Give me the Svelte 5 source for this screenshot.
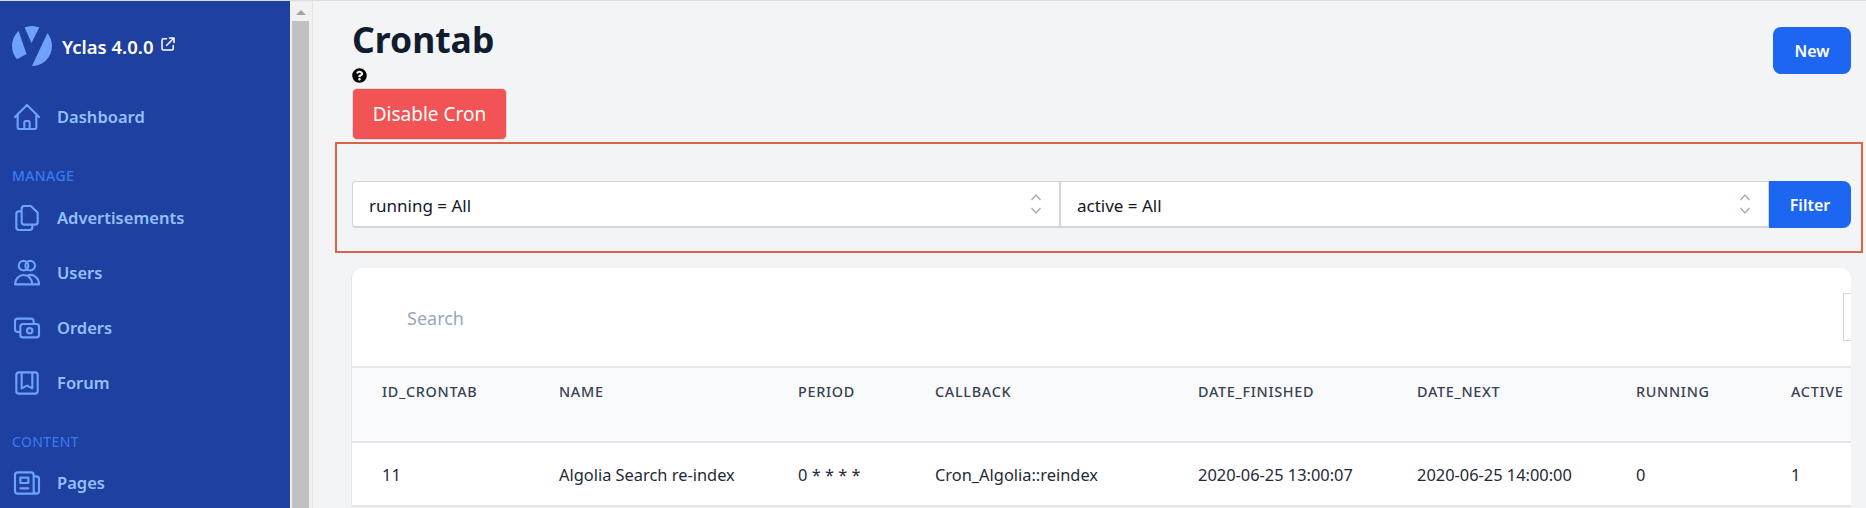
<script>
  const manage = [
    { label: "Advertisements", icon: "duplicate" },
    { label: "Users", icon: "users" },
    { label: "Orders", icon: "cash" },
    { label: "Forum", icon: "bookmark" }
  ];
  const paths = {
    home: "M3 12l2-2m0 0l7-7 7 7M5 10v10a1 1 0 001 1h3m10-11l2 2m-2-2v10a1 1 0 01-1 1h-3m-6 0a1 1 0 001-1v-4a1 1 0 011-1h2a1 1 0 011 1v4a1 1 0 001 1m-6 0h6",
    duplicate: "M8 7v8a2 2 0 002 2h6M8 7V5a2 2 0 012-2h4.586a1 1 0 01.707.293l4.414 4.414a1 1 0 01.293.707V15a2 2 0 01-2 2h-2M8 7H6a2 2 0 00-2 2v10a2 2 0 002 2h8a2 2 0 002-2v-2",
    users: "M13 6.5a3.6 3.6 0 11-7.2 0 3.6 3.6 0 017.2 0zM18 6.5a3.6 3.6 0 11-7.2 0 3.6 3.6 0 017.2 0zM3 20.5c0-4 3-7 6.5-7s6.5 3 6.5 7zM13 13.6c4.5-1 8 2.4 8 6.9h-5",
    cash: "M17 9V7a2 2 0 00-2-2H5a2 2 0 00-2 2v6a2 2 0 002 2h2m2 4h10a2 2 0 002-2v-6a2 2 0 00-2-2H9a2 2 0 00-2 2v6a2 2 0 002 2zm7-5a2 2 0 11-4 0 2 2 0 014 0z",
    bookmark: "M16 4v12l-4-2-4 2V4M6 20h12a2 2 0 002-2V6a2 2 0 00-2-2H6a2 2 0 00-2 2v12a2 2 0 002 2z",
    newspaper: "M19 20H5a2 2 0 01-2-2V6a2 2 0 012-2h10a2 2 0 012 2v1m2 13a2 2 0 01-2-2V7m2 13a2 2 0 002-2V9a2 2 0 00-2-2h-2m-4-3H9M7 16h6M7 8h6v4H7V8z"
  };
  const columns = ["ID_CRONTAB", "NAME", "PERIOD", "CALLBACK", "DATE_FINISHED", "DATE_NEXT", "RUNNING", "ACTIVE"];
  const row = ["11", "Algolia Search re-index", "0 * * * *", "Cron_Algolia::reindex", "2020-06-25 13:00:07", "2020-06-25 14:00:00", "0", "1"];
</script>

{#snippet navItem(label, icon)}
  <a class="nav-item" href="#top">
    <svg class="nav-icon" viewBox="0 0 24 24" fill="none" stroke="#6ea2fb" stroke-width="1.6" stroke-linecap="round" stroke-linejoin="round">
      <path d={paths[icon]} />
    </svg>
    <span>{label}</span>
  </a>
{/snippet}

{#snippet updown()}
  <svg class="updown" viewBox="0 0 12 24" fill="none" stroke="#a0aec0" stroke-width="1.5">
    <path d="M1.5 8l4.5-5 4.5 5M1.5 16l4.5 5 4.5-5" />
  </svg>
{/snippet}

<div class="page">
  <aside class="sidebar">
    <div class="brand">
      <svg class="logo" viewBox="0 0 40 40">
        <circle cx="20" cy="20" r="20" fill="#6ea2fb" />
        <path d="M5 0L8 9 14.5 28 0 36v6H19L35 8 40 0H28L19.5 17 12 0z" fill="#1e40a0" />
      </svg>
      <span class="brand-name">Yclas 4.0.0</span>
      <svg class="external" viewBox="0 0 24 24" fill="none" stroke="#fff" stroke-width="2" stroke-linecap="round" stroke-linejoin="round">
        <path d="M10 5H6a2 2 0 00-2 2v11a2 2 0 002 2h11a2 2 0 002-2v-4M14 4h6v6M20 4L10 14" />
      </svg>
    </div>
    {@render navItem("Dashboard", "home")}
    <div class="section">MANAGE</div>
    {#each manage as item}
      {@render navItem(item.label, item.icon)}
    {/each}
    <div class="section content">CONTENT</div>
    {@render navItem("Pages", "newspaper")}
  </aside>

  <div class="scrollbar">
    <div class="arrow"></div>
    <div class="thumb"></div>
  </div>

  <main class="main">
    <div class="head">
      <div>
        <h1>Crontab</h1>
        <svg class="help" viewBox="0 0 512 512">
          <path fill="#000" d="M504 256c0 137-111 248-248 248S8 393 8 256 119 8 256 8s248 111 248 248zM263 90c-54 0-89 23-116 64-4 5-3 12 2 16l35 26c5 4 13 3 17-2 18-22 30-35 57-35 20 0 45 13 45 33 0 15-12 23-33 34-23 13-54 30-54 71v6c0 7 5 12 12 12h56c7 0 12-5 12-12v-2c0-29 84-30 84-107 0-58-60-104-117-104zm-7 248c-25 0-46 21-46 46s21 46 46 46 46-21 46-46-21-46-46-46z" />
        </svg>
        <button class="btn-danger">Disable Cron</button>
      </div>
      <button class="btn-new">New</button>
    </div>

    <form class="filter">
      <div class="select"><span>running = All</span> {@render updown()}</div>
      <div class="select second"><span>active = All</span> {@render updown()}</div>
      <button class="btn-filter" type="button">Filter</button>
    </form>

    <section class="card">
      <div class="search">
        <span>Search</span>
        <div class="stub"></div>
      </div>
      <div class="grid header">
        {#each columns as col}
          <div>{col}</div>
        {/each}
      </div>
      <div class="grid body">
        {#each row as cell}
          <div>{cell}</div>
        {/each}
      </div>
    </section>
  </main>
</div>

<style>
  :global(body) {
    margin: 0;
    overflow: hidden;
    font-family: "Noto Sans", "Open Sans", sans-serif;
  }
  .page {
    display: flex;
    height: 507px;
    border-top: 1px solid #dcdde0;
    overflow: hidden;
    background: #f3f4f6;
    color: #111827;
  }
  .sidebar {
    width: 290px;
    flex: none;
    background: #1e40a0;
    color: #93c0fd;
    box-sizing: border-box;
  }
  .brand {
    display: flex;
    align-items: center;
    padding: 25px 12px 0;
    height: 40px;
    margin-bottom: 23px;
  }
  .logo {
    width: 40px;
    height: 40px;
    flex: none;
  }
  .brand-name {
    margin-left: 10px;
    color: #fff;
    font-size: 18.5px;
    font-weight: 600;
  }
  .external {
    width: 18px;
    height: 18px;
    margin-left: 6px;
    margin-top: -4px;
  }
  .nav-item {
    display: flex;
    align-items: center;
    height: 55px;
    padding-left: 11px;
    color: inherit;
    text-decoration: none;
    font-size: 16.5px;
    font-weight: 600;
  }
  .nav-icon {
    width: 32px;
    height: 32px;
    flex: none;
    margin-right: 14px;
  }
  .section {
    margin: 21px 0 0 12px;
    height: 25px;
    line-height: 22px;
    font-size: 14px;
    font-weight: 500;
    letter-spacing: 0.4px;
    color: #3b7bf2;
  }
  .section.content {
    margin-top: 21px;
    height: 24px;
    font-weight: 400;
  }
  .scrollbar {
    width: 17px;
    flex: none;
    padding: 0 3px 0 2px;
    background: #f1f1f1;
    border-right: 1px solid #e3e4e6;
  }
  .arrow {
    width: 0;
    margin: 9px auto 6px;
    border: 5px solid transparent;
    border-top: 0;
    border-bottom: 5px solid #a3a3a3;
  }
  .thumb {
    height: 500px;
    background: #c1c1c1;
  }
  .main {
    flex: 1;
    min-width: 0;
    padding: 0 4px 0 20px;
  }
  .head {
    display: flex;
    justify-content: space-between;
    align-items: flex-start;
    padding: 0 11px 0 19px;
    height: 141px;
  }
  h1 {
    margin: 13px 0 0;
    font-size: 35.5px;
    line-height: 50px;
    font-weight: 700;
    color: #111c2e;
  }
  .help {
    display: block;
    width: 15px;
    height: 15px;
    margin: 4px 0 5px;
  }
  button {
    font-family: inherit;
    border: 0;
    color: #fff;
  }
  .btn-danger {
    width: 155px;
    height: 52px;
    font-size: 19px;
    background: #f25455;
    border: 1px solid #d8dbe0;
    border-radius: 5px;
  }
  .btn-new {
    width: 78px;
    height: 47px;
    margin-top: 26px;
    background: #1d66f2;
    font-size: 16px;
    font-weight: 600;
    border-radius: 8px;
  }
  .filter {
    display: flex;
    align-items: stretch;
    height: 111px;
    box-sizing: border-box;
    border: 2px solid #d9664a;
    padding: 37px 10px 23px 15px;
    margin: 0 -1px 0 2px;
  }
  .select {
    display: flex;
    align-items: center;
    justify-content: space-between;
    width: 708px;
    box-sizing: border-box;
    padding: 0 17px 0 16px;
    background: #fff;
    border: 1px solid #d1d5db;
    border-bottom-width: 2px;
    border-radius: 4px 0 0 4px;
    font-size: 17px;
    color: #111827;
  }
  .select span {
    padding-top: 2px;
  }
  .select.second {
    width: 709px;
    border-left: 1px solid #d1d5db;
    border-radius: 0;
  }
  .updown {
    width: 12px;
    height: 24px;
  }
  .btn-filter {
    flex: 1;
    background: #1d66f2;
    font-size: 16px;
    font-weight: 600;
    border-radius: 0 8px 8px 0;
  }
  .card {
    margin: 15px 11px 0 18px;
    background: #fff;
    border-radius: 10px 10px 0 0;
    border-left: 1px solid #e5e7eb;
  }
  .search {
    display: flex;
    justify-content: space-between;
    align-items: center;
    height: 98px;
    padding-left: 55px;
    font-size: 18px;
    color: #9aa7bb;
  }
  .search span {
    padding-top: 2px;
  }
  .stub {
    width: 8px;
    height: 48px;
    box-sizing: border-box;
    border: 1px solid #d5d7db;
    border-right: 0;
  }
  .grid {
    display: grid;
    grid-template-columns: 177px 239px 137px 263px 219px 219px 155px 1fr;
    padding-left: 30px;
    border-top: 2px solid #e5e7eb;
    font-size: 16.4px;
    overflow: hidden;
    white-space: nowrap;
  }
  .header {
    height: 75px;
    padding-top: 12px;
    box-sizing: border-box;
    line-height: 24px;
    background: #f9fafb;
    font-size: 14.4px;
    font-weight: 500;
    letter-spacing: 0.7px;
    color: #374151;
  }
  .body {
    height: 66px;
    padding-top: 1px;
    box-sizing: border-box;
    align-items: center;
    color: #1f2937;
    border-bottom: 2px solid #e5e7eb;
  }
</style>
